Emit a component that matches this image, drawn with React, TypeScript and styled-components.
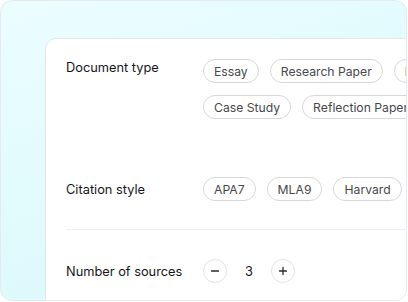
import styled, { createGlobalStyle } from 'styled-components'

const GlobalStyle = createGlobalStyle`
  html, body {
    margin: 0;
    padding: 0;
    background: #ffffff;
  }
  body {
    font-family: Inter, "Noto Sans", "Liberation Sans", sans-serif;
  }
`

const Frame = styled.div`
  box-sizing: border-box;
  width: 407px;
  height: 301px;
  border: 1px solid #e6eaec;
  border-radius: 12px;
  overflow: hidden;
  background: linear-gradient(160deg, #ecfdfe 0%, #e2fbfd 45%, #d8f7fb 100%);
  padding: 37px 0 0 44px;
`

const Card = styled.div`
  box-sizing: border-box;
  width: 480px;
  height: 300px;
  background: #ffffff;
  border: 1px solid #e4e6e8;
  border-radius: 11px;
  padding: 20px 0 0 20px;
`

const Row = styled.div<{ $align?: string }>`
  display: grid;
  grid-template-columns: 137px 1fr;
  align-items: ${(p) => p.$align || 'center'};
`

const Label = styled.div<{ $offset?: number }>`
  font-size: 12.8px;
  font-weight: 400;
  color: #161618;
  padding-top: ${(p) => p.$offset || 0}px;
`

const ChipGroup = styled.div<{ $width?: number }>`
  display: flex;
  flex-wrap: wrap;
  gap: 12px 11px;
  width: ${(p) => (p.$width ? p.$width + 'px' : 'auto')};
`

const Chip = styled.span`
  box-sizing: border-box;
  height: 24px;
  display: inline-flex;
  align-items: center;
  padding: 0 10px;
  border: 1px solid #d8d8da;
  border-radius: 999px;
  font-size: 12.2px;
  color: #48484b;
  white-space: nowrap;
  background: #ffffff;
`

const Divider = styled.div`
  height: 1px;
  background: #f1f1f2;
  margin: 28px 0 0 0;
`

const Stepper = styled.div`
  display: flex;
  align-items: center;
`

const StepButton = styled.button`
  box-sizing: border-box;
  width: 24px;
  height: 24px;
  border-radius: 50%;
  border: 1px solid #e3e3e5;
  background: #ffffff;
  padding: 0;
  display: flex;
  align-items: center;
  justify-content: center;
  color: #2a2a2c;
`

const Count = styled.span`
  width: 44px;
  text-align: center;
  font-size: 12.8px;
  color: #161618;
`

const Section = styled.div<{ $top: number }>`
  margin-top: ${(p) => p.$top}px;
`

const docTypes = ['Essay', 'Research Paper', 'Dissertation', 'Case Study', 'Reflection Paper', 'Lab Report']
const citations = ['APA7', 'MLA9', 'Harvard', 'Chicago']

function Minus() {
  return (
    <svg width="10" height="10" viewBox="0 0 10 10">
      <path d="M1.5 5h7" stroke="currentColor" strokeWidth="1.3" strokeLinecap="round" />
    </svg>
  )
}

function Plus() {
  return (
    <svg width="10" height="10" viewBox="0 0 10 10">
      <path d="M1.5 5h7M5 1.5v7" stroke="currentColor" strokeWidth="1.3" strokeLinecap="round" />
    </svg>
  )
}

export default function App() {
  return (
    <>
      <GlobalStyle />
      <Frame>
        <Card>
          <Row $align="start">
            <Label $offset={1}>Document type</Label>
            <ChipGroup $width={320}>
              {docTypes.map((d) => (
                <Chip key={d}>{d}</Chip>
              ))}
            </ChipGroup>
          </Row>
          <Section $top={58}>
            <Row>
              <Label>Citation style</Label>
              <ChipGroup $width={320}>
                {citations.map((c) => (
                  <Chip key={c}>{c}</Chip>
                ))}
              </ChipGroup>
            </Row>
          </Section>
          <Divider />
          <Section $top={29}>
            <Row>
              <Label>Number of sources</Label>
              <Stepper>
                <StepButton aria-label="decrease">
                  <Minus />
                </StepButton>
                <Count>3</Count>
                <StepButton aria-label="increase">
                  <Plus />
                </StepButton>
              </Stepper>
            </Row>
          </Section>
        </Card>
      </Frame>
    </>
  )
}
